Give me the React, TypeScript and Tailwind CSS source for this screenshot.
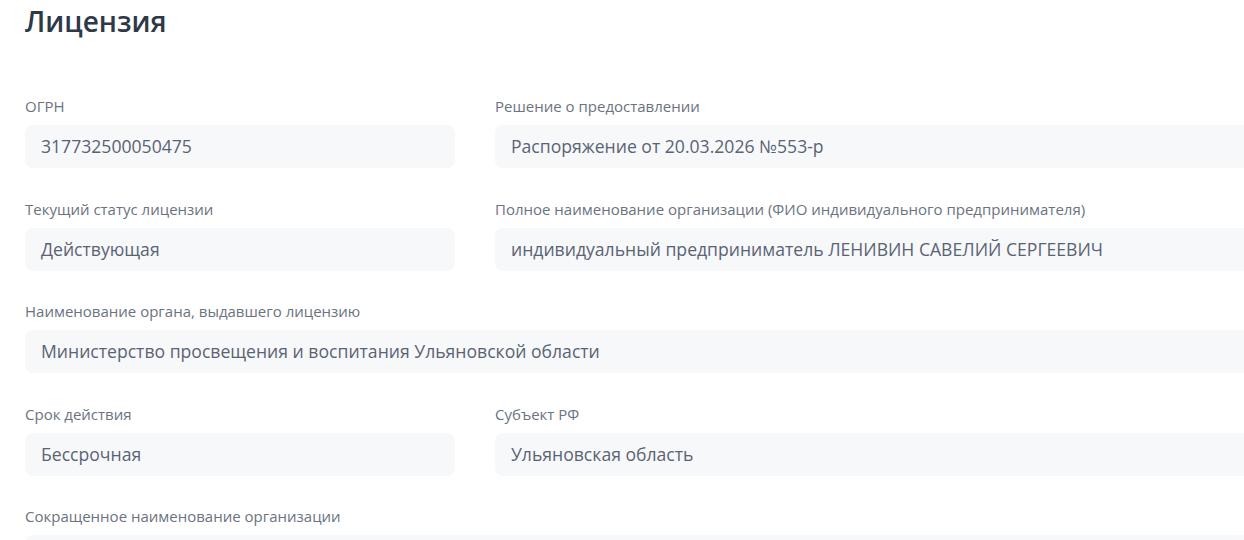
const rows: { label: string; value: string; full?: boolean }[][] = [
  [
    { label: "ОГРН", value: "317732500050475" },
    { label: "Решение о предоставлении", value: "Распоряжение от 20.03.2026 №553-р" },
  ],
  [
    { label: "Текущий статус лицензии", value: "Действующая" },
    {
      label: "Полное наименование организации (ФИО индивидуального предпринимателя)",
      value: "индивидуальный предприниматель ЛЕНИВИН САВЕЛИЙ СЕРГЕЕВИЧ",
    },
  ],
  [
    {
      label: "Наименование органа, выдавшего лицензию",
      value: "Министерство просвещения и воспитания Ульяновской области",
      full: true,
    },
  ],
  [
    { label: "Срок действия", value: "Бессрочная" },
    { label: "Субъект РФ", value: "Ульяновская область" },
  ],
  [{ label: "Сокращенное наименование организации", value: "", full: true }],
];

function Field({ label, value }: { label: string; value: string }) {
  return (
    <div className="flex flex-col">
      <div className="h-5 text-[15px] leading-5 text-[#6b7380]">{label}</div>
      <div className="mt-[9px] h-[43px] rounded-lg bg-[#f7f8fa] px-4 flex items-center text-[17.6px] text-[#5a6373] whitespace-nowrap">
        {value}
      </div>
    </div>
  );
}

export default function App() {
  return (
    <div
      className="h-[540px] w-[1244px] overflow-hidden bg-white"
      style={{ fontFamily: '"Open Sans", "Noto Sans", sans-serif' }}
    >
      <div className="w-[1300px] pl-[25px]">
        <h1 className="pt-[3px] text-[28px] leading-9 font-semibold text-[#2f3847]">Лицензия</h1>
        <div className="mt-[57px] flex flex-col gap-[30.5px]">
          {rows.map((row, i) =>
            row[0].full ? (
              <Field key={i} label={row[0].label} value={row[0].value} />
            ) : (
              <div key={i} className="grid grid-cols-[430px_1fr] gap-x-10">
                {row.map((f) => (
                  <Field key={f.label} label={f.label} value={f.value} />
                ))}
              </div>
            )
          )}
        </div>
      </div>
    </div>
  );
}
